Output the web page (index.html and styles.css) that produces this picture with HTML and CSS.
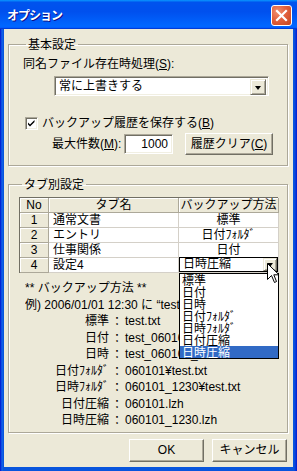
FILE: index.html
```html
<!DOCTYPE html>
<html lang="ja">
<head>
<meta charset="utf-8">
<title>オプション</title>
<link rel="stylesheet" href="styles.css">
</head>
<body>
<div class="window">
  <div class="titlebar">
    <span class="title">オプション</span>
    <span class="close">
      <svg width="21" height="21" viewBox="0 0 21 21"><path d="M6 6 L15 15 M15 6 L6 15" stroke="#fff" stroke-width="2.2" stroke-linecap="square"/></svg>
    </span>
  </div>
  <div class="client">
    <fieldset class="group g1">
      <legend>基本設定</legend>
      <div class="lbl">同名ファイル存在時処理(<u>S</u>):</div>
      <div class="combo wide">
        <span class="cval">常に上書きする</span>
        <span class="ddbtn"><i class="tri"></i></span>
      </div>
      <div class="chkrow">
        <span class="chk"><svg width="11" height="11" viewBox="0 0 11 11"><path d="M2 4.5 L4 6.5 L8.5 2 L8.5 4 L4 8.5 L2 6.5 Z" fill="#000"/></svg></span>
        <span>バックアップ履歴を保存する(<u>B</u>)</span>
      </div>
      <div class="maxrow">
        <span class="maxlbl">最大件数(<u>M</u>):</span>
        <span class="field">1000</span>
        <span class="btn clear">履歴クリア(<u>C</u>)</span>
      </div>
    </fieldset>

    <fieldset class="group g2">
      <legend>タブ別設定</legend>
      <div class="grid">
        <div class="hd">No</div><div class="hd">タブ名</div><div class="hd">バックアップ方法</div>
        <div class="no">1</div><div class="nm">通常文書</div><div class="md">標準</div>
        <div class="no">2</div><div class="nm">エントリ</div><div class="md">日付ﾌｫﾙﾀﾞ</div>
        <div class="no">3</div><div class="nm">仕事関係</div><div class="md">日付</div>
        <div class="no">4</div><div class="nm">設定4</div>
        <div class="md edit">
          <div class="cellcombo">
            <span class="cval">日時圧縮</span>
            <span class="ddbtn small"><i class="tri"></i></span>
            <div class="droplist">
              <div class="opt">標準</div>
              <div class="opt">日付</div>
              <div class="opt">日時</div>
              <div class="opt">日付ﾌｫﾙﾀﾞ</div>
              <div class="opt">日時ﾌｫﾙﾀﾞ</div>
              <div class="opt">日付圧縮</div>
              <div class="opt sel">日時圧縮</div>
            </div>
            <svg class="cursor" width="13" height="21" viewBox="0 0 13 21"><path d="M0.5 0.5 L0.5 16.5 L4.5 12.5 L7.5 19.5 L9.5 18.5 L6.8 11.8 L12 11.8 Z" fill="#fff" stroke="#000" stroke-width="1" stroke-linejoin="miter"/></svg>
          </div>
        </div>
      </div>
      <div class="desc">
        <div class="line">** バックアップ方法 **</div>
        <div class="line">例) 2006/01/01 12:30 に “test.txt” を保存</div>
        <div class="ex"><span class="k">標準</span><span class="c">：</span><span class="v">test.txt</span></div>
        <div class="ex"><span class="k">日付</span><span class="c">：</span><span class="v">test_060101.txt</span></div>
        <div class="ex"><span class="k">日時</span><span class="c">：</span><span class="v">test_060101_1230.txt</span></div>
        <div class="ex"><span class="k">日付ﾌｫﾙﾀﾞ</span><span class="c">：</span><span class="v">060101¥test.txt</span></div>
        <div class="ex"><span class="k">日時ﾌｫﾙﾀﾞ</span><span class="c">：</span><span class="v">060101_1230¥test.txt</span></div>
        <div class="ex"><span class="k">日付圧縮</span><span class="c">：</span><span class="v">060101.lzh</span></div>
        <div class="ex"><span class="k">日時圧縮</span><span class="c">：</span><span class="v">060101_1230.lzh</span></div>
      </div>
    </fieldset>

    <div class="buttons">
      <span class="btn dlg">OK</span>
      <span class="btn dlg">キャンセル</span>
    </div>
  </div>
</div>
</body>
</html>
```

FILE: styles.css
```css
* { box-sizing: border-box; }
html, body { margin: 0; padding: 0; }
body {
  width: 297px;
  height: 471px;
  overflow: hidden;
  font-family: "Liberation Sans", "Noto Sans CJK JP", sans-serif;
  font-size: 12px;
  line-height: 14px;
  color: #000;
  background: #fff;
}
u { text-decoration: underline; text-underline-offset: 1px; }

.window {
  width: 297px;
  height: 471px;
  display: flex;
  flex-direction: column;
  background: linear-gradient(to right, #0019CF 0, #0831D9 1px, #166AEE 2px, #0855DD 3px, #0855DD 294px, #0831D9 296px, #0019CF 297px);
}

.titlebar {
  height: 29px;
  flex: none;
  display: flex;
  align-items: center;
  padding: 0 5px 0 7px;
  background: linear-gradient(#0997FF 0, #0053EE 8%, #0050EE 40%, #0066FF 88%, #0066FF 93%, #005BFF 95%, #003DD7 96%, #003DD7 100%);
}
.title {
  flex: 1;
  color: #fff;
  font-family: "Noto Sans CJK JP", sans-serif;
  font-weight: bold;
  font-size: 12px;
  letter-spacing: -1px;
  text-shadow: 1px 1px 0 #0F1089;
  margin-top: 1px;
}
.close {
  width: 21px;
  height: 21px;
  display: block;
  border: 1px solid #fff;
  border-radius: 3px;
  background: radial-gradient(circle at 30% 30%, #F09070 0, #E2613E 45%, #C5451E 100%);
  margin-top: 1px;
}
.close svg { display: block; margin: -1px; }

.client {
  flex: 1;
  margin: 0 4px 4px 4px;
  background: #ECE9D8;
  display: flex;
  flex-direction: column;
  padding: 8px 5px 0 4px;
}

.group {
  margin: 0;
  border: 1px solid #ACA899;
  box-shadow: inset 1px 1px 0 #fff, 1px 1px 0 #fff;
  border-radius: 0;
  min-width: 0;
}
.group legend {
  padding: 0 2px;
  margin-left: 3px;
  line-height: 14px;
  font-family: "Noto Sans CJK JP", sans-serif;
}

.g1 { padding: 6px 14px 10px 14px; }
.lbl { line-height: 14px; }

.combo {
  display: flex;
  height: 20px;
  background: #fff;
  border: 1px solid;
  border-color: #ACA899 #fff #fff #ACA899;
  box-shadow: inset 1px 1px 0 #716F64, inset -1px -1px 0 #F1EFE2;
  padding: 2px;
}
.wide { margin: 5px 0 0 31px; width: 215px; }
.cval { flex: 1; line-height: 14px; padding-left: 2px; white-space: nowrap; }
.ddbtn {
  width: 16px;
  height: 16px;
  flex: none;
  background: #ECE9D8;
  border: 1px solid;
  border-color: #ECE9D8 #716F64 #716F64 #ECE9D8;
  box-shadow: inset 1px 1px 0 #fff, inset -1px -1px 0 #ACA899;
  display: flex;
  align-items: center;
  justify-content: center;
}
.tri {
  width: 0; height: 0;
  border-left: 3.5px solid transparent;
  border-right: 3.5px solid transparent;
  border-top: 4px solid #000;
  margin-top: 1px;
}

.chkrow {
  display: flex;
  align-items: center;
  gap: 4px;
  margin: 20px 0 0 2px;
  height: 14px;
}
.chk {
  width: 13px;
  height: 13px;
  background: #fff;
  border: 1px solid;
  border-color: #ACA899 #fff #fff #ACA899;
  box-shadow: inset 1px 1px 0 #716F64, inset -1px -1px 0 #F1EFE2;
  display: flex;
  align-items: center;
  justify-content: center;
}
.chk svg { display: block; }

.maxrow {
  display: flex;
  align-items: center;
  height: 22px;
  margin-top: 3px;
}
.maxlbl { width: 101px; padding-left: 29px; white-space: nowrap; flex: none; }
.field {
  width: 49px;
  height: 20px;
  flex: none;
  background: #fff;
  border: 1px solid;
  border-color: #ACA899 #fff #fff #ACA899;
  box-shadow: inset 1px 1px 0 #716F64, inset -1px -1px 0 #F1EFE2;
  text-align: right;
  padding: 2px 4px 0 0;
  line-height: 14px;
}
.btn {
  display: flex;
  align-items: center;
  justify-content: center;
  background: #ECE9D8;
  border: 1px solid;
  border-color: #fff #716F64 #716F64 #fff;
  box-shadow: inset -1px -1px 0 #ACA899;
  white-space: nowrap;
}
.clear { width: 88px; height: 22px; margin-left: 12px; flex: none; }

.g2 { margin-top: 11px; padding: 6px 9px 3px 10px; flex: none; }
.grid {
  display: grid;
  grid-template-columns: 29px 130px 100px;
  grid-auto-rows: 15px;
  width: 259px;
  border-top: 1px solid #716F64;
  border-left: 1px solid #716F64;
}
.grid > div { line-height: 14px; white-space: nowrap; }
.hd, .no {
  background: #ECE9D8;
  text-align: center;
  border-right: 1px solid #ACA899;
  border-bottom: 1px solid #ACA899;
  box-shadow: inset 1px 1px 0 #fff;
}
.nm, .md {
  background: #fff;
  border-right: 1px solid #D4D0C8;
  border-bottom: 1px solid #D4D0C8;
}
.nm { padding-left: 4px; }
.md { text-align: center; }
.md.edit { position: relative; padding: 0; text-align: left; }
.cellcombo {
  display: flex;
  height: 15px;
  margin-top: -1px;
  background: #fff;
  border: 1px solid #000;
  padding: 0 0 0 2px;
  position: relative;
}
.cellcombo .cval { line-height: 13px; font-size: 12px; padding-left: 1px; }
.ddbtn.small { width: 14px; height: 13px; }
.droplist {
  position: absolute;
  left: -1px;
  top: 15px;
  width: 100px;
  height: 86px;
  background: #fff;
  border: 1px solid #000;
  z-index: 2;
  font-family: "Noto Sans CJK JP", sans-serif;
}
.opt { height: 12px; line-height: 12px; padding-left: 2px; font-size: 12px; }
.opt.sel { background: #316AC5; color: #fff; }
.cursor { position: absolute; left: 87px; top: 5px; z-index: 3; }

.desc { margin: 7px 0 0 6px; white-space: nowrap; overflow: hidden; width: 250px; }
.line, .ex { height: 16.5px; line-height: 16.5px; }
.ex { display: grid; grid-template-columns: 84px 12px auto; column-gap: 2px; }
.k { text-align: right; }
.c { font-family: "Noto Sans CJK JP", sans-serif; }

.buttons {
  display: flex;
  justify-content: flex-end;
  gap: 8px;
  margin-top: 6px;
  padding-right: 1px;
}
.dlg { width: 75px; height: 23px; }
```
